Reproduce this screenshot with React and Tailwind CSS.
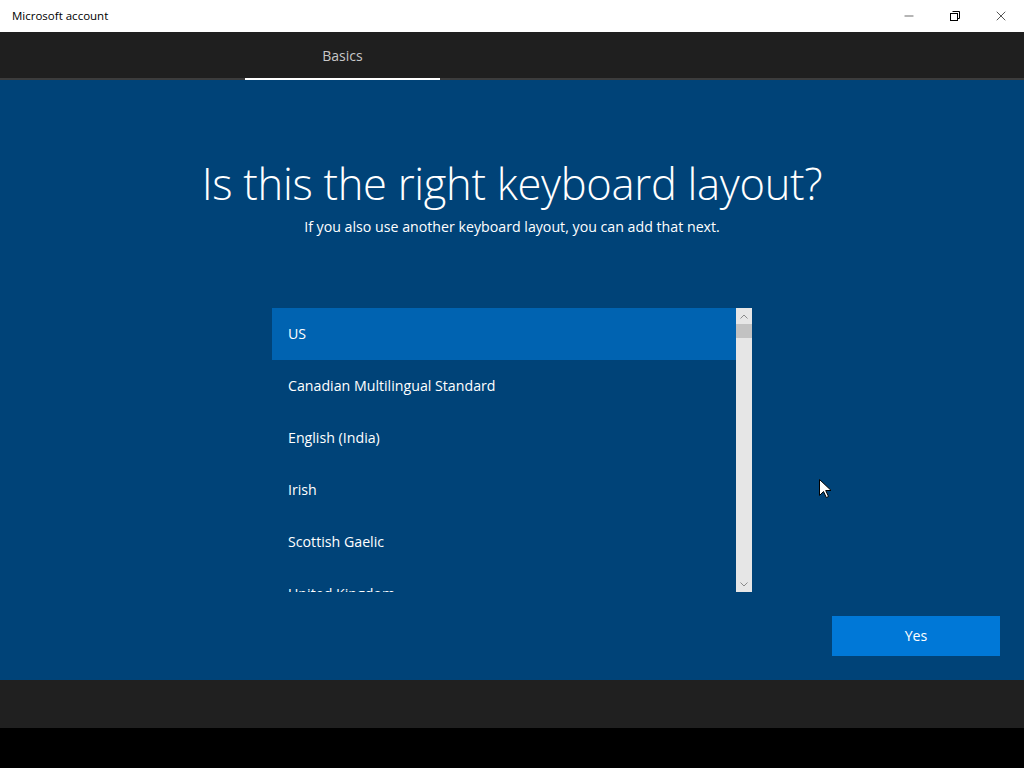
import { Minus, X } from 'lucide-react'

const layouts = ['US', 'Canadian Multilingual Standard', 'English (India)', 'Irish', 'Scottish Gaelic', 'United Kingdom']

function RestoreIcon() {
  return (
    <svg width="10" height="10" viewBox="0 0 10 10" fill="none" stroke="#000" strokeWidth="1">
      <path d="M2.5 0.5h7v7h-2" />
      <rect x="0.5" y="2.5" width="7" height="7" />
    </svg>
  )
}

function Cursor() {
  return (
    <svg width="12" height="19" viewBox="0 0 12 19" className="absolute left-[819px] top-[479px]">
      <path d="M0.5 0.5v16l4-4 2.8 6 2.2-1-2.8-6h5.5z" fill="#fff" stroke="#000" strokeWidth="1" />
    </svg>
  )
}

export default function App() {
  return (
    <div className="relative w-[1024px] h-[768px] overflow-hidden bg-black font-['Open_Sans','Noto_Sans',sans-serif]">
      {/* title bar */}
      <div className="h-8 bg-white flex items-center">
        <span className="pl-3 text-[11.5px] text-black">Microsoft account</span>
        <div className="ml-auto flex h-full">
          <div className="w-[46px] flex items-center justify-center"><Minus size={14} strokeWidth={1} /></div>
          <div className="w-[46px] flex items-center justify-center"><RestoreIcon /></div>
          <div className="w-[46px] flex items-center justify-center"><X size={16} strokeWidth={1} /></div>
        </div>
      </div>

      {/* tab strip */}
      <div className="h-12 bg-[#1f1f1f] border-b-2 border-[#3c3c3c] flex">
        <div className="ml-[245px] w-[195px] flex items-center justify-center text-[14px] text-[#c8c8c8] border-b-2 border-white -mb-[2px]">
          Basics
        </div>
      </div>

      {/* main */}
      <div className="h-[600px] bg-[#004378] flex flex-col items-center text-white">
        <h1 className="mt-[76px] text-[43.5px] font-light leading-[56px] tracking-[-0.3px]">Is this the right keyboard layout?</h1>
        <p className="mt-[5px] text-[14.2px] leading-5">If you also use another keyboard layout, you can add that next.</p>

        <div className="mt-[71px] w-[480px] h-[284px] flex">
          <div className="flex-1 overflow-hidden">
            {layouts.map((l, i) => (
              <div key={l} className={`h-[52px] flex items-center px-4 text-[14.2px] ${i === 0 ? 'bg-[#0063b1]' : ''}`}>
                {l}
              </div>
            ))}
          </div>
          <div className="w-4 bg-[#e6e6e6] flex flex-col">
            <div className="h-4 flex items-center justify-center">
              <svg width="8" height="5" viewBox="0 0 8 5"><path d="M0.5 4.5L4 1l3.5 3.5" fill="none" stroke="#8a8a8a" /></svg>
            </div>
            <div className="h-[14px] bg-[#c2c2c2]" />
            <div className="flex-1" />
            <div className="h-4 flex items-center justify-center">
              <svg width="8" height="5" viewBox="0 0 8 5"><path d="M0.5 0.5L4 4l3.5-3.5" fill="none" stroke="#8a8a8a" /></svg>
            </div>
          </div>
        </div>

        <div className="self-end mr-6 mt-6">
          <button className="w-[168px] h-10 bg-[#0078d7] text-[14.2px] text-white">Yes</button>
        </div>
      </div>

      {/* bottom bar */}
      <div className="h-12 bg-[#202020]" />

      <Cursor />
    </div>
  )
}
